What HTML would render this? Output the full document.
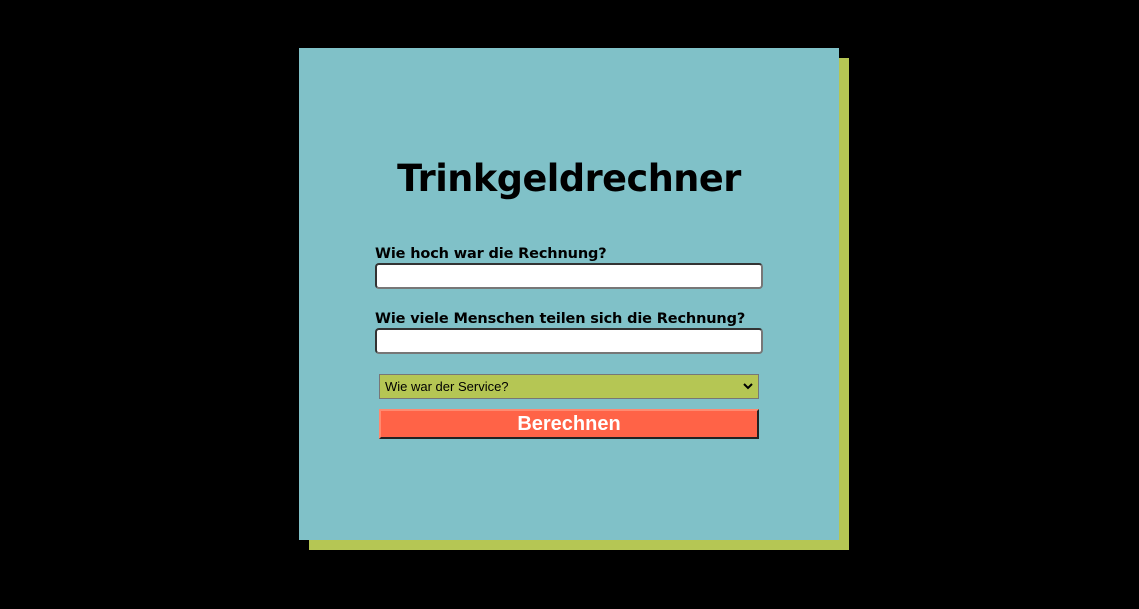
<!DOCTYPE html>
<html><head><style>
body{margin:0;background:#000;width:1139px;height:609px;position:relative;overflow:hidden;font-family:"DejaVu Sans",Verdana,sans-serif}
.sh{position:absolute;left:309px;top:58px;width:540px;height:492px;background:#b5c654}
.card{position:absolute;left:299px;top:48px;width:540px;height:492px;background:#80c1c8}
h1{position:absolute;left:0;width:540px;top:105px;margin:0;text-align:center;font-size:37px;font-weight:bold;line-height:52px;letter-spacing:-0.5px;transform:scaleX(0.99)}
.lbl{position:absolute;left:76px;font-size:14.5px;font-weight:bold;letter-spacing:-0.15px;line-height:18px}
.inp{position:absolute;left:76px;width:384px;height:22px;background:#fff;border:2px solid #333;border-right-color:#777;border-bottom-color:#777;border-radius:4px}
.sel{position:absolute;left:80px;top:326px;background:#b5c654;border:1px solid #777;font-family:"Liberation Sans",Arial,sans-serif;font-size:13px;line-height:23px;padding-left:5px;box-sizing:border-box;width:380px;height:25px}
.sel svg{position:absolute;right:5px;top:8px}
.btn{position:absolute;left:80px;top:361px;width:380px;height:30px;box-sizing:border-box;background:#ff6347;border:2px solid;border-color:#ff8a70 #222 #222 #ff8a70;color:#fff;font-family:"Liberation Sans",Arial,sans-serif;font-weight:bold;font-size:20px;text-align:center;line-height:26px}
</style></head><body>
<div class="sh"></div>
<div class="card">
<h1>Trinkgeldrechner</h1>
<div class="lbl" style="top:197px">Wie hoch war die Rechnung?</div>
<div class="inp" style="top:215px"></div>
<div class="lbl" style="top:262px">Wie viele Menschen teilen sich die Rechnung?</div>
<div class="inp" style="top:280px"></div>
<div class="sel">Wie war der Service?<svg width="10" height="7" viewBox="0 0 10 7"><path d="M1 1l4 4 4-4" stroke="#000" stroke-width="2" fill="none"/></svg></div>
<div class="btn">Berechnen</div>
</div>
</body></html>
